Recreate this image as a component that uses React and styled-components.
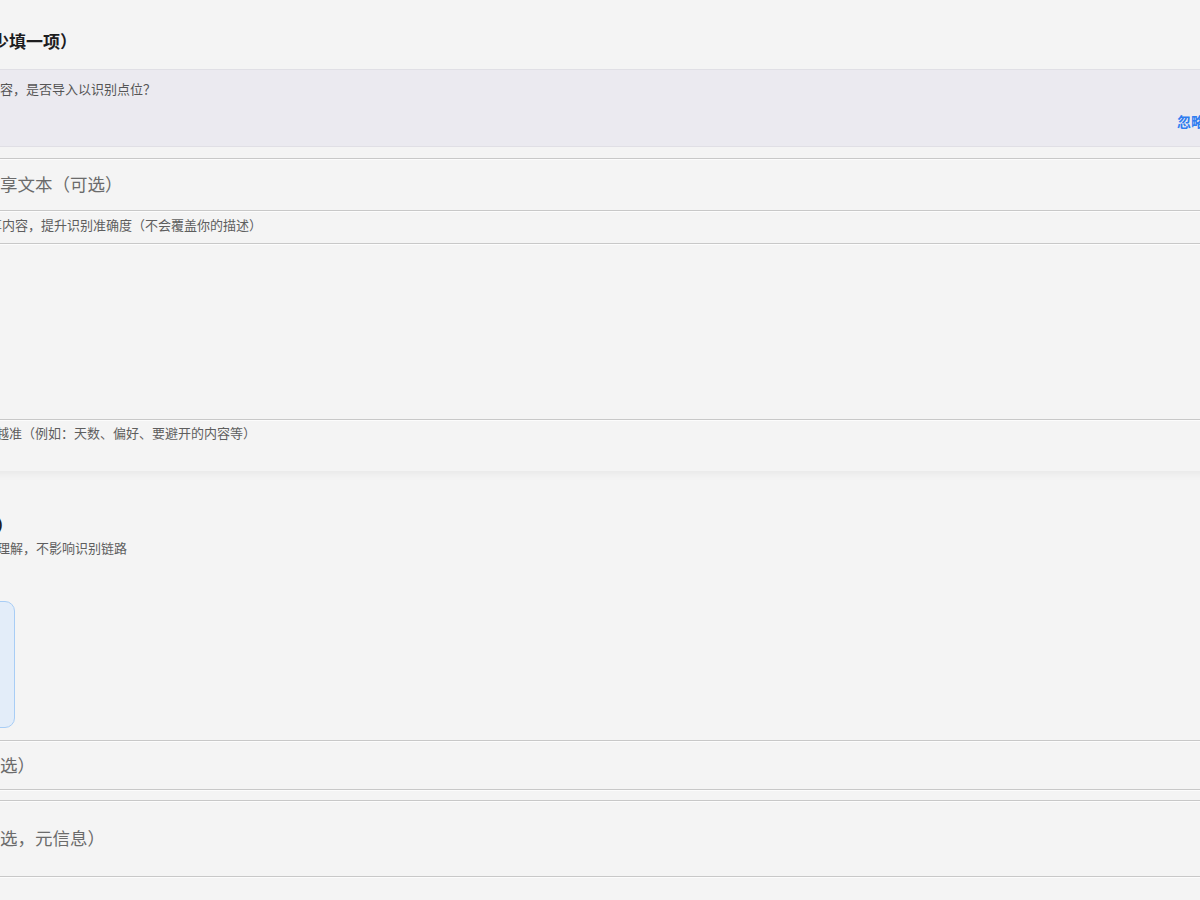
import React from 'react';
import styled, { createGlobalStyle } from 'styled-components';

const GlobalStyle = createGlobalStyle`
    html, body{
        margin: 0;
        padding: 0;
        background: #f4f4f4;
        overflow: hidden;
    }
    body{
        font-family: "Noto Sans CJK SC", "Noto Sans", sans-serif;
        color: #1f1f1f;
    }
`;

function App(){
    return(
        <>
            <GlobalStyle />
            <PageStyled>
                <Card>
                    <SectionTitle $shift={-4}>识别内容（至少填一项）</SectionTitle>
                    <Banner>
                        <p>检测到剪贴板有内容，是否导入以识别点位？</p>
                        <div className='actions'>
                            <button type='button'>忽略</button>
                        </div>
                    </Banner>
                    <Rule $gap={11} />
                    <Field $height={50} placeholder='粘贴小红书分享文本（可选）' />
                    <Rule />
                    <Hint $indent={17} $top={4} $bottom={9}>粘贴小红书分享内容，提升识别准确度（不会覆盖你的描述）</Hint>
                    <Rule />
                    <Area />
                    <Rule />
                    <Hint $indent={11} $top={3} $bottom={29}>描述越详细识别越准（例如：天数、偏好、要避开的内容等）</Hint>
                </Card>

                <Section>
                    <SectionTitle $tight>图片（非必填）</SectionTitle>
                    <Hint $indent={12} $top={0} $bottom={0}>截图仅用于辅助理解，不影响识别链路</Hint>
                    <UploadTile type='button' aria-label='上传图片' />
                    <Rule $gap={12} />
                    <Field $height={47} placeholder='来源链接（可选）' />
                    <Rule />
                    <Rule $gap={9} />
                    <Field $height={74} placeholder='笔记标题（可选，元信息）' />
                    <Rule />
                </Section>
            </PageStyled>
        </>
    )
}

const PageStyled = styled.div`
    margin-left: -106px;
    width: 1323px;
`;

const Card = styled.section`
    padding: 29px 0 0;
    background: #f4f4f4;
    box-shadow: 0 3px 8px rgba(0, 0, 0, 0.05);
`;

const Section = styled.section`
    padding-top: 42px;
`;

const SectionTitle = styled.h2`
    margin: 0 0 ${props => props.$tight ? '2px' : '16px'} ${props => props.$shift || 0}px;
    font-size: 17px;
    line-height: 24px;
    font-weight: 700;
    color: #1d1d1f;
    white-space: nowrap;
`;

const Banner = styled.div`
    margin-left: -10px;
    padding: 10px 12px 15px;
    background: #ebeaf0;
    border-top: 1px solid #e0dfe5;
    border-bottom: 1px solid #e0dfe5;
    p{
        margin: 0;
        font-size: 13px;
        line-height: 18px;
        color: #555;
        white-space: nowrap;
    }
    .actions{
        display: flex;
        justify-content: flex-end;
        margin-top: 13px;
    }
    button{
        border: none;
        background: none;
        padding: 0;
        font-family: inherit;
        font-size: 14px;
        line-height: 20px;
        font-weight: 700;
        color: #2f7df0;
        cursor: pointer;
    }
`;

const Rule = styled.hr`
    margin: ${props => props.$gap || 0}px 0 0;
    height: 0;
    border: none;
    border-top: 1px solid #c8c8c8;
    border-bottom: 1px solid #fcfcfc;
`;

const Field = styled.input`
    display: block;
    box-sizing: border-box;
    width: 100%;
    height: ${props => props.$height}px;
    padding: 0 13px 3px 1px;
    border: none;
    background: transparent;
    font-family: inherit;
    font-size: 17.5px;
    color: #333;
    outline: none;
    &::placeholder{
        color: #6b6b6b;
    }
`;

const Area = styled.textarea`
    display: block;
    box-sizing: border-box;
    width: 100%;
    height: 174px;
    padding: 8px 13px;
    border: none;
    background: transparent;
    resize: none;
    font-family: inherit;
    font-size: 15px;
    outline: none;
`;

const Hint = styled.p`
    margin: 0;
    padding: ${props => props.$top}px 0 ${props => props.$bottom}px ${props => props.$indent}px;
    font-size: 13px;
    line-height: 18px;
    color: #5e5e5e;
    white-space: nowrap;
`;

const UploadTile = styled.button`
    display: block;
    box-sizing: border-box;
    width: 121px;
    height: 127px;
    margin-top: 44px;
    padding: 0;
    border: 1.5px solid #a8cdf5;
    border-radius: 10px;
    background: #e3edf9;
    cursor: pointer;
`;

export default App;
